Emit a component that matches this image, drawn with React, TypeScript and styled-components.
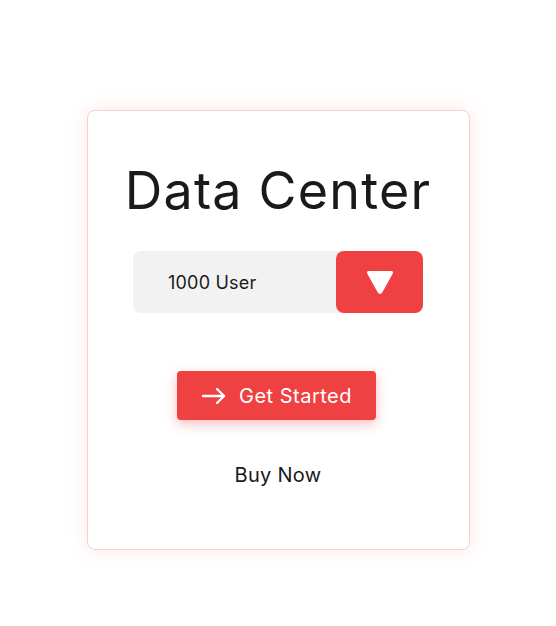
import React from "react";
import styled, { createGlobalStyle } from "styled-components";

const Global = createGlobalStyle`
  html, body { margin: 0; padding: 0; background: #ffffff; }
  body { font-family: "Inter", "Open Sans", sans-serif; color: #1a1a1a; }
`;

const Page = styled.div`
  width: 556px;
  height: 626px;
  display: flex;
  justify-content: center;
  padding-top: 110px;
  box-sizing: border-box;
`;

const Card = styled.div`
  width: 383px;
  height: 440px;
  box-sizing: border-box;
  background: #fff;
  border: 1px solid #f8d0d0;
  border-radius: 8px;
  box-shadow: 0 0 20px rgba(239, 68, 68, 0.13);
  display: flex;
  flex-direction: column;
  align-items: center;
  padding-top: 50px;
`;

const Title = styled.h1`
  margin: 0;
  font-family: "Inter", sans-serif;
  font-weight: 400;
  font-size: 52px;
  line-height: 60px;
  letter-spacing: 1.2px;
  color: #1a1a1a;
`;

const Select = styled.div`
  margin-top: 30px;
  width: 290px;
  height: 62px;
  display: flex;
  background: #f2f2f2;
  border-radius: 8px;
`;

const SelectLabel = styled.div`
  flex: 1;
  display: flex;
  align-items: center;
  padding-left: 35px;
  font-size: 18px;
  letter-spacing: 0.2px;
  color: #1a1a1a;
`;

const SelectButton = styled.div`
  width: 87px;
  height: 62px;
  background: #ef4142;
  border-radius: 8px;
  display: flex;
  align-items: center;
  justify-content: center;
`;

const CTA = styled.button`
  margin-top: 58px;
  margin-right: 3px;
  width: 199px;
  height: 49px;
  border: none;
  border-radius: 4px;
  background: #ef4142;
  color: #fff;
  font-family: "Inter", sans-serif;
  font-size: 20px;
  letter-spacing: 0.5px;
  display: flex;
  align-items: center;
  justify-content: center;
  gap: 12px;
  box-shadow: 0 4px 12px rgba(239, 65, 66, 0.35);
  cursor: pointer;
`;

const BuyNow = styled.div`
  margin-top: 43px;
  font-size: 20px;
  letter-spacing: 0.3px;
  color: #1a1a1a;
`;

export default function App() {
  return (
    <>
      <Global />
      <Page>
        <Card>
          <Title>Data Center</Title>
          <Select>
            <SelectLabel>1000 User</SelectLabel>
            <SelectButton>
              <svg width="28" height="26" viewBox="0 0 28 26">
                <path
                  d="M3 2 H25 Q28 2 26.5 5 L16.5 23 Q14 27 11.5 23 L1.5 5 Q0 2 3 2 Z"
                  fill="#fff"
                />
              </svg>
            </SelectButton>
          </Select>
          <CTA>
            <svg width="26" height="18" viewBox="0 0 26 18" fill="none" stroke="#fff" strokeWidth="2.4" strokeLinecap="round" strokeLinejoin="round">
              <path d="M2 9 H23 M16 2 L23 9 L16 16" />
            </svg>
            Get Started
          </CTA>
          <BuyNow>Buy Now</BuyNow>
        </Card>
      </Page>
    </>
  );
}
